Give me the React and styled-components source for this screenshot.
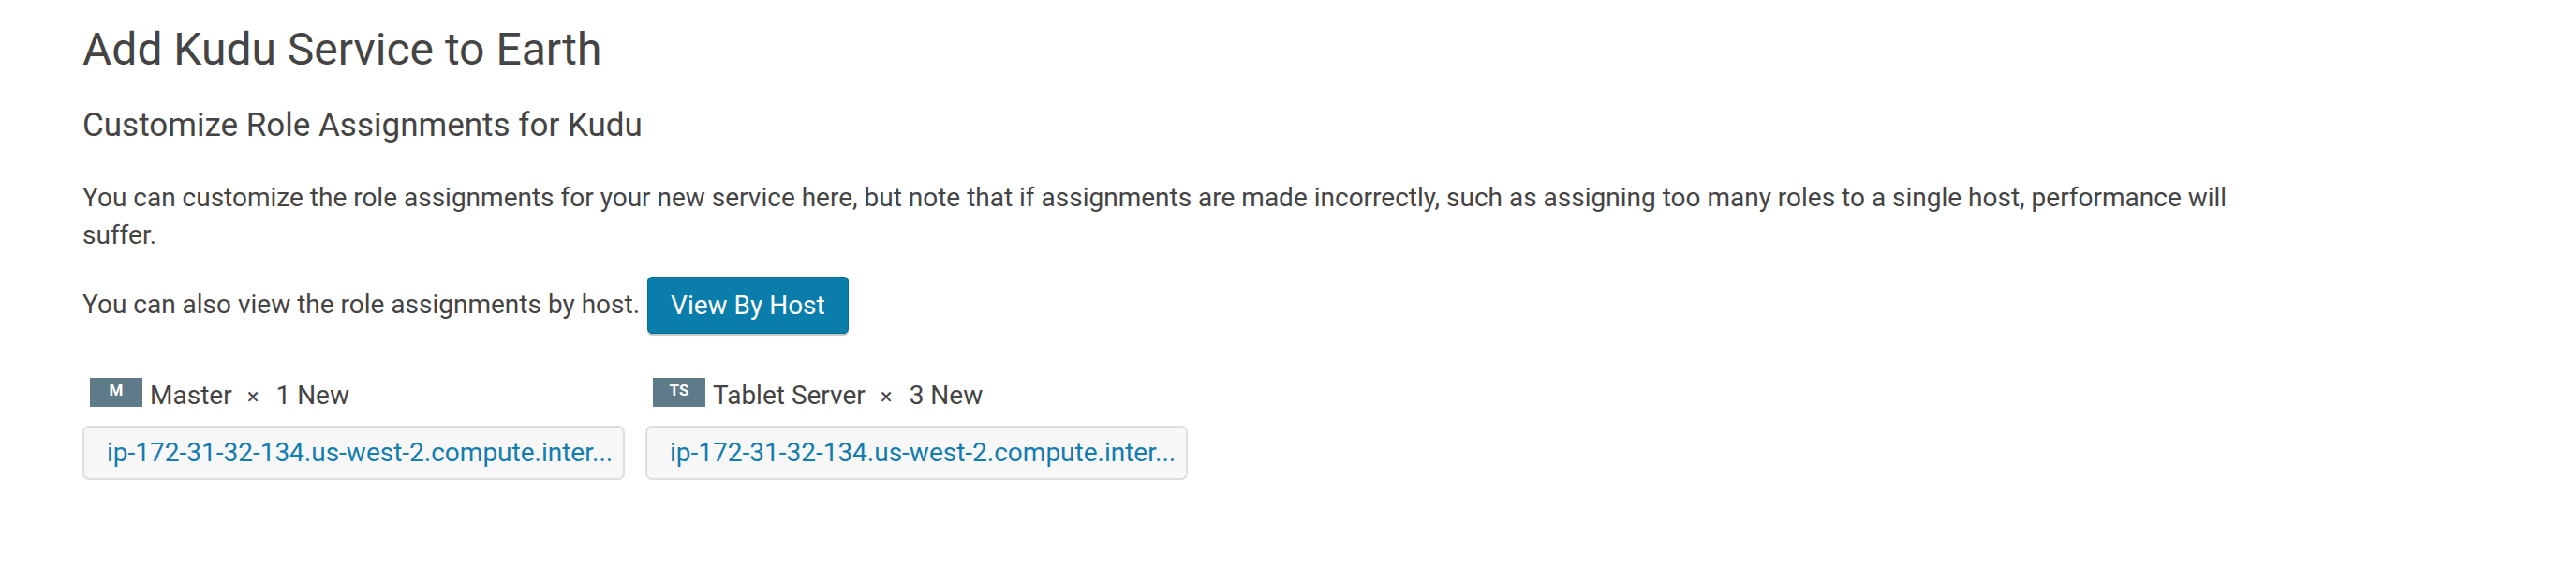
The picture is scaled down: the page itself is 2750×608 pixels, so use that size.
import React from 'react'
import styled, { createGlobalStyle } from 'styled-components'

const GlobalStyle = createGlobalStyle`
  html, body {
    margin: 0;
    padding: 0;
    background: #fff;
  }
  body {
    font-family: Roboto, "Liberation Sans", Arial, sans-serif;
    color: #444;
  }
`

const Page = styled.div`
  padding: 26px 88px 0 88px;
`

const Title = styled.h1`
  margin: 0;
  font-size: 48px;
  font-weight: 400;
  line-height: 54px;
  color: #444;
`

const SubTitle = styled.h2`
  margin: 35px 0 0 0;
  font-size: 35px;
  font-weight: 400;
  line-height: 38.5px;
  color: #444;
`

const Text = styled.p`
  margin: 37px 0 0 0;
  max-width: 2330px;
  font-size: 28px;
  line-height: 40px;
`

const HostRow = styled.div`
  display: flex;
  align-items: center;
  gap: 8px;
  margin-top: 24px;
  font-size: 28px;
  line-height: 40px;
`

const Button = styled.button`
  height: 61px;
  padding: 0 24px;
  background: #0b7dab;
  border: 1px solid #0a6f99;
  border-radius: 5px;
  box-shadow: 0 2px 1px rgba(0, 0, 0, 0.22);
  color: #fff;
  font-family: Roboto, "Liberation Sans", Arial, sans-serif;
  font-size: 28px;
  cursor: pointer;
`

const Roles = styled.div`
  display: flex;
  gap: 22px;
  margin-top: 47px;
`

const RoleColumn = styled.div`
  display: flex;
  flex-direction: column;
  gap: 20px;
  width: 579px;
`

const RoleHeader = styled.div`
  display: flex;
  align-items: flex-end;
  height: 31px;
  padding-left: 8px;
  color: #444;
`

const Badge = styled.span`
  display: inline-flex;
  align-items: center;
  justify-content: center;
  align-self: stretch;
  width: 56px;
  margin-right: 8px;
  background: #5f7a88;
  color: #fff;
  font-size: 17px;
  line-height: 1;
  font-weight: 700;
  padding-bottom: 4px;
  box-sizing: border-box;
`

const Label = styled.span`
  font-size: 28px;
  line-height: 21px;
  white-space: nowrap;
`

const Times = styled.span`
  margin: 0 18px 0 16px;
  font-size: 24px;
`

const HostBox = styled.div`
  box-sizing: border-box;
  height: 58px;
  padding: 0 13px 0 24px;
  background: #f7f7f7;
  border: 2px solid #dedede;
  border-radius: 7px;
  color: #137db0;
  font-size: 28px;
  line-height: 54px;
  white-space: nowrap;
`

const roles = [
  { short: 'M', name: 'Master', count: 1 },
  { short: 'TS', name: 'Tablet Server', count: 3 },
]

export default function App() {
  return (
    <>
      <GlobalStyle />
      <Page>
        <Title>Add Kudu Service to Earth</Title>
        <SubTitle>Customize Role Assignments for Kudu</SubTitle>
        <Text>
          You can customize the role assignments for your new service here, but note that if
          assignments are made incorrectly, such as assigning too many roles to a single host,
          performance will suffer.
        </Text>
        <HostRow>
          <span>You can also view the role assignments by host.</span>
          <Button>View By Host</Button>
        </HostRow>
        <Roles>
          {roles.map((r) => (
            <RoleColumn key={r.short}>
              <RoleHeader>
                <Badge>{r.short}</Badge>
                <Label>
                  {r.name}
                  <Times>×</Times>
                  {r.count} New
                </Label>
              </RoleHeader>
              <HostBox>ip-172-31-32-134.us-west-2.compute.inter...</HostBox>
            </RoleColumn>
          ))}
        </Roles>
      </Page>
    </>
  )
}
